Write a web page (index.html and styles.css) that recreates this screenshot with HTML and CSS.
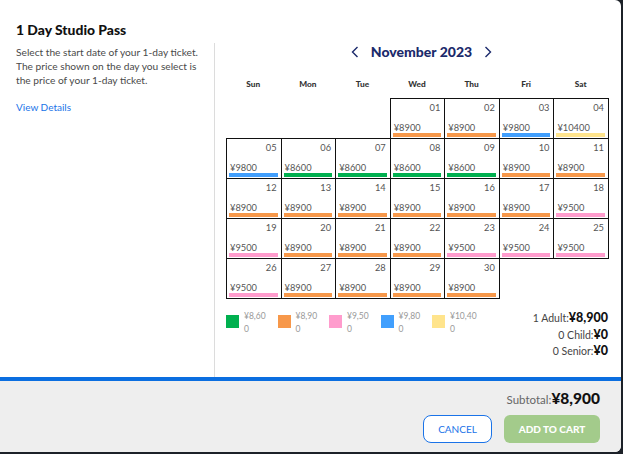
FILE: index.html
```html
<!DOCTYPE html>
<html lang="en">
<head>
<meta charset="utf-8">
<title>1 Day Studio Pass</title>
<link rel="stylesheet" href="styles.css">
</head>
<body>
<div class="modal">
  <div class="main">
    <h1 class="title">1 Day Studio Pass</h1>
    <div class="body">
      <aside class="info">
        <p class="desc">Select the start date of your 1-day ticket. The price shown on the day you select is the price of your 1-day ticket.</p>
        <a class="details" href="#">View Details</a>
      </aside>
      <section class="cal">
        <div class="month">
          <svg class="chev" width="8" height="12" viewBox="0 0 8 12"><polyline points="6.5,1 1.5,6 6.5,11" fill="none" stroke="#1b2a6b" stroke-width="1.4"/></svg>
          <span class="month-label">November 2023</span>
          <svg class="chev" width="8" height="12" viewBox="0 0 8 12"><polyline points="1.5,1 6.5,6 1.5,11" fill="none" stroke="#1b2a6b" stroke-width="1.4"/></svg>
        </div>
        <div class="dow">
          <span>Sun</span><span>Mon</span><span>Tue</span><span>Wed</span><span>Thu</span><span>Fri</span><span>Sat</span>
        </div>
        <div class="days">
          <div class="empty"></div><div class="empty"></div><div class="empty"></div>
          <div class="day"><span class="num">01</span><span class="price">¥8900</span><span class="bar t89"></span></div>
          <div class="day"><span class="num">02</span><span class="price">¥8900</span><span class="bar t89"></span></div>
          <div class="day"><span class="num">03</span><span class="price">¥9800</span><span class="bar t98"></span></div>
          <div class="day"><span class="num">04</span><span class="price">¥10400</span><span class="bar t104"></span></div>

          <div class="day"><span class="num">05</span><span class="price">¥9800</span><span class="bar t98"></span></div>
          <div class="day"><span class="num">06</span><span class="price">¥8600</span><span class="bar t86"></span></div>
          <div class="day"><span class="num">07</span><span class="price">¥8600</span><span class="bar t86"></span></div>
          <div class="day"><span class="num">08</span><span class="price">¥8600</span><span class="bar t86"></span></div>
          <div class="day"><span class="num">09</span><span class="price">¥8600</span><span class="bar t86"></span></div>
          <div class="day"><span class="num">10</span><span class="price">¥8900</span><span class="bar t89"></span></div>
          <div class="day"><span class="num">11</span><span class="price">¥8900</span><span class="bar t89"></span></div>

          <div class="day"><span class="num">12</span><span class="price">¥8900</span><span class="bar t89"></span></div>
          <div class="day"><span class="num">13</span><span class="price">¥8900</span><span class="bar t89"></span></div>
          <div class="day"><span class="num">14</span><span class="price">¥8900</span><span class="bar t89"></span></div>
          <div class="day"><span class="num">15</span><span class="price">¥8900</span><span class="bar t89"></span></div>
          <div class="day"><span class="num">16</span><span class="price">¥8900</span><span class="bar t89"></span></div>
          <div class="day"><span class="num">17</span><span class="price">¥8900</span><span class="bar t89"></span></div>
          <div class="day"><span class="num">18</span><span class="price">¥9500</span><span class="bar t95"></span></div>

          <div class="day"><span class="num">19</span><span class="price">¥9500</span><span class="bar t95"></span></div>
          <div class="day"><span class="num">20</span><span class="price">¥8900</span><span class="bar t89"></span></div>
          <div class="day"><span class="num">21</span><span class="price">¥8900</span><span class="bar t89"></span></div>
          <div class="day"><span class="num">22</span><span class="price">¥8900</span><span class="bar t89"></span></div>
          <div class="day"><span class="num">23</span><span class="price">¥9500</span><span class="bar t95"></span></div>
          <div class="day"><span class="num">24</span><span class="price">¥9500</span><span class="bar t95"></span></div>
          <div class="day"><span class="num">25</span><span class="price">¥9500</span><span class="bar t95"></span></div>

          <div class="day"><span class="num">26</span><span class="price">¥9500</span><span class="bar t95"></span></div>
          <div class="day"><span class="num">27</span><span class="price">¥8900</span><span class="bar t89"></span></div>
          <div class="day"><span class="num">28</span><span class="price">¥8900</span><span class="bar t89"></span></div>
          <div class="day"><span class="num">29</span><span class="price">¥8900</span><span class="bar t89"></span></div>
          <div class="day"><span class="num">30</span><span class="price">¥8900</span><span class="bar t89"></span></div>
        </div>
        <div class="bottom">
          <ul class="legend">
            <li><span class="sw t86"></span><span class="lt">¥8,600</span></li>
            <li><span class="sw t89"></span><span class="lt">¥8,900</span></li>
            <li><span class="sw t95"></span><span class="lt">¥9,500</span></li>
            <li><span class="sw t98"></span><span class="lt">¥9,800</span></li>
            <li class="wide"><span class="sw t104"></span><span class="lt">¥10,400</span></li>
          </ul>
          <div class="summary">
            <div>1 Adult:<b>¥8,900</b></div>
            <div>0 Child:<b>¥0</b></div>
            <div>0 Senior:<b>¥0</b></div>
          </div>
        </div>
      </section>
    </div>
  </div>
  <footer class="footer">
    <div class="subtotal">Subtotal:<b>¥8,900</b></div>
    <div class="actions">
      <button class="btn cancel" type="button">CANCEL</button>
      <button class="btn add" type="button">ADD TO CART</button>
    </div>
  </footer>
</div>
</body>
</html>
```

FILE: styles.css
```css
html, body {
  margin: 0;
  padding: 0;
}
body {
  background: #1c2128;
  font-family: Lato, "Noto Sans", sans-serif;
  width: 623px;
  height: 454px;
  overflow: hidden;
}
.modal {
  width: 621px;
  height: 452px;
  background: #fff;
  border-radius: 0 6px 6px 0;
  overflow: hidden;
  display: flex;
  flex-direction: column;
}
.main {
  flex: 1;
  display: flex;
  flex-direction: column;
  min-height: 0;
}
.title {
  margin: 0 0 5px;
  padding: 21px 16px 0;
  font-size: 13.9px;
  line-height: 17px;
  font-weight: 900;
  color: #111;
}
.body {
  flex: 1;
  display: flex;
}
.info {
  width: 215px;
  box-sizing: border-box;
  padding: 3px 14px 0 16px;
  border-right: 1px solid #dcdcdc;
  flex: none;
}
.desc {
  margin: 0;
  font-size: 10.2px;
  line-height: 13.8px;
  color: #4a4a4a;
}
.details {
  display: block;
  margin-top: 14px;
  font-size: 10px;
  line-height: 13.8px;
  color: #1a73e8;
  text-decoration: none;
}
.cal {
  flex: 1;
  padding-left: 11px;
}
.month {
  width: 382px;
  box-sizing: border-box;
  padding-left: 9px;
  height: 18px;
  display: flex;
  justify-content: center;
  align-items: center;
  gap: 12px;
}
.month-label {
  color: #1b2a6b;
  font-weight: 900;
  font-size: 14px;
  line-height: 18px;
}
.chev {
  display: block;
}
.dow {
  width: 382px;
  display: grid;
  grid-template-columns: repeat(7, 1fr);
  margin-top: 15px;
  font-size: 8.3px;
  font-weight: 900;
  line-height: 16px;
  text-align: center;
  color: #333;
}
.days {
  width: 382px;
  display: grid;
  grid-template-columns: repeat(7, 1fr);
  grid-auto-rows: 40px;
  margin-top: 6px;
}
.day {
  border: 1px solid #111;
  margin: 0 -1px -1px 0;
  display: flex;
  flex-direction: column;
  padding: 3px 3px 1px 2px;
}
.num {
  text-align: right;
  font-size: 9.3px;
  line-height: 11px;
  color: #555;
  padding-right: 1px;
}
.price {
  margin-top: auto;
  font-size: 9.3px;
  line-height: 10px;
  color: #555;
  padding-left: 1px;
}
.bar {
  height: 4px;
  flex: none;
}
.t86 { background: #00b04f; }
.t89 { background: #f7984a; }
.t95 { background: #ff9ccd; }
.t98 { background: #419ffd; }
.t104 { background: #ffe48c; }
.bottom {
  width: 382px;
  display: flex;
  justify-content: space-between;
  margin-top: 12px;
}
.legend {
  display: flex;
  list-style: none;
  margin: 0;
  padding: 0;
}
.legend li {
  display: flex;
  align-items: flex-start;
  width: 51.5px;
}
.sw {
  width: 13px;
  height: 13px;
  margin-top: 5px;
  flex: none;
}
.lt {
  margin-left: 5px;
  width: 23px;
  font-size: 8.5px;
  line-height: 12.6px;
  color: #999;
  word-break: break-all;
}
.legend .wide .lt {
  width: 28px;
}
.summary {
  text-align: right;
  font-size: 10.5px;
  line-height: 16.7px;
  color: #444;
}
.summary b {
  font-size: 12.5px;
  color: #111;
  font-weight: 900;
}
.footer {
  flex: none;
  height: 71px;
  box-sizing: content-box;
  border-top: 4px solid #0b6ee0;
  background: #eeeeee;
  padding: 0 21px 0 0;
  display: flex;
  flex-direction: column;
  align-items: flex-end;
}
.subtotal {
  margin-top: 7px;
  font-size: 11.5px;
  line-height: 20px;
  color: #666;
}
.subtotal b {
  font-size: 15.5px;
  color: #111;
  font-weight: 900;
}
.actions {
  display: flex;
  gap: 12px;
  margin-top: 5px;
}
.btn {
  height: 28px;
  box-sizing: border-box;
  font-family: Lato, "Noto Sans", sans-serif;
  font-size: 10px;
  padding: 0;
  cursor: pointer;
}
.cancel {
  width: 69px;
  background: #fff;
  border: 1px solid #1a73e8;
  border-radius: 8px;
  color: #1a73e8;
}
.add {
  width: 96px;
  background: #a3cb8b;
  border: none;
  border-radius: 6px;
  color: #fff;
  font-weight: 900;
}
```
